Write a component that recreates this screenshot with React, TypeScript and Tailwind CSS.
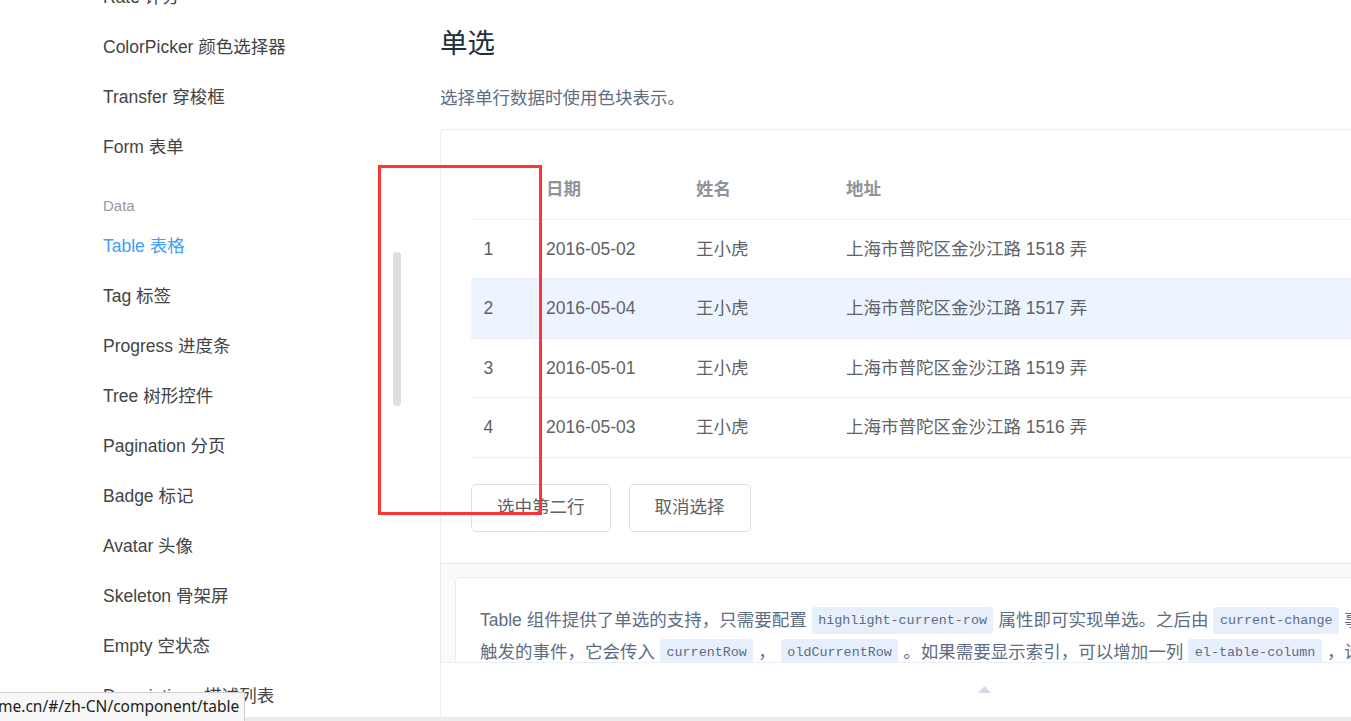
import React from "react";

const navTop = ["Rate 评分", "ColorPicker 颜色选择器", "Transfer 穿梭框", "Form 表单"];
const navData = [
  "Table 表格",
  "Tag 标签",
  "Progress 进度条",
  "Tree 树形控件",
  "Pagination 分页",
  "Badge 标记",
  "Avatar 头像",
  "Skeleton 骨架屏",
  "Empty 空状态",
  "Descriptions 描述列表",
];

const rows = [
  { date: "2016-05-02", name: "王小虎", address: "上海市普陀区金沙江路 1518 弄" },
  { date: "2016-05-04", name: "王小虎", address: "上海市普陀区金沙江路 1517 弄" },
  { date: "2016-05-01", name: "王小虎", address: "上海市普陀区金沙江路 1519 弄" },
  { date: "2016-05-03", name: "王小虎", address: "上海市普陀区金沙江路 1516 弄" },
];

function Code({ children }: { children: React.ReactNode }) {
  return (
    <span className="mx-[5px] inline-block h-[27px] rounded-[3px] bg-[#e6effb] px-[6.5px] font-['Liberation_Mono',monospace] text-[13.4px] leading-[27px] text-[#5e6d82]">
      {children}
    </span>
  );
}

export default function App() {
  return (
    <div className="relative flex h-[721px] w-[1351px] overflow-hidden bg-white font-['Liberation_Sans','Noto_Sans_CJK_SC',sans-serif]">
      {/* Sidebar */}
      <aside className="flex w-[440px] shrink-0 flex-col pl-[103px] -mt-[28px]">
        {navTop.map((item) => (
          <div key={item} className="h-[50px] whitespace-nowrap text-[17.5px] leading-[50px] text-[#444]">
            {item}
          </div>
        ))}
        <div className="h-[50px] pt-[26px] text-[15px] leading-[16px] text-[#999]">Data</div>
        {navData.map((item, i) => (
          <div
            key={item}
            className={
              i === 0
                ? "h-[50px] whitespace-nowrap text-[17.5px] leading-[50px] text-[#409eff]"
                : "h-[50px] whitespace-nowrap text-[17.5px] leading-[50px] text-[#444]"
            }
          >
            {item}
          </div>
        ))}
      </aside>

      {/* Main */}
      <main className="flex w-[1088px] shrink-0 flex-col">
        <h3 className="mt-[26px] text-[27.5px] font-normal leading-[36px] text-[#1f2f3d]">单选</h3>
        <p className="mt-[22px] text-[17.5px] leading-[28px] text-[#5e6d82]">选择单行数据时使用色块表示。</p>

        <div className="mt-[17px] flex flex-1 flex-col rounded-t-[5px] border-x border-t border-[#ebebeb]">
          {/* Source */}
          <div className="border-b border-[#ebebeb] px-[30px] pb-[31px] pt-[30px]">
            <div className="text-[17.5px]">
              <div className="flex h-[60px] items-center border-b border-[#ebeef5] font-bold text-[#909399]">
                <div className="w-[62.5px] pl-[12.5px]"></div>
                <div className="w-[150px] pl-[12.5px]">日期</div>
                <div className="w-[150px] pl-[12.5px]">姓名</div>
                <div className="flex-1 pl-[12.5px]">地址</div>
              </div>
              {rows.map((r, i) => (
                <div
                  key={r.date}
                  className={
                    i === 1
                      ? "flex h-[59.4px] items-center border-b border-[#ebeef5] bg-[#ecf5ff] text-[#606266]"
                      : "flex h-[59.4px] items-center border-b border-[#ebeef5] text-[#606266]"
                  }
                >
                  <div className="w-[62.5px] pl-[12.5px]">{i + 1}</div>
                  <div className="w-[150px] pl-[12.5px]">{r.date}</div>
                  <div className="w-[150px] pl-[12.5px]">{r.name}</div>
                  <div className="flex-1 whitespace-nowrap pl-[12.5px]">{r.address}</div>
                </div>
              ))}
            </div>
            <div className="mt-[26px] flex gap-[18px]">
              <button className="h-[48px] rounded-[5px] border border-[#dcdfe6] bg-white px-[25px] text-[17.5px] text-[#606266]">
                选中第二行
              </button>
              <button className="h-[48px] rounded-[5px] border border-[#dcdfe6] bg-white px-[25px] text-[17.5px] text-[#606266]">
                取消选择
              </button>
            </div>
          </div>

          {/* Meta */}
          <div className="h-[98px] overflow-hidden bg-[#fafafa] px-[14px] pt-[13px]">
            <div className="rounded-[5px] border border-[#ebebeb] bg-white px-[24px] pt-[27px] pb-[20px] text-[17.5px] text-[#5e6d82]">
              <div className="flex h-[32px] items-center whitespace-nowrap">
                <span>Table 组件提供了单选的支持，只需要配置</span>
                <Code>highlight-current-row</Code>
                <span>属性即可实现单选。之后由</span>
                <Code>current-change</Code>
                <span>事件来管理选中时</span>
              </div>
              <div className="flex h-[32px] items-center whitespace-nowrap">
                <span>触发的事件，它会传入</span>
                <Code>currentRow</Code>
                <span>，</span>
                <Code>oldCurrentRow</Code>
                <span>。如果需要显示索引，可以增加一列</span>
                <Code>el-table-column</Code>
                <span>，设置</span>
                <Code>type</Code>
                <span>属性为</span>
                <Code>index</Code>
                <span>即可显示从 1 开始的索引号。</span>
              </div>
            </div>
          </div>

          {/* Control */}
          <div className="flex h-[55px] items-center justify-center border-t border-[#eaeefb] bg-white">
            <svg width="13" height="7" viewBox="0 0 13 7">
              <polygon points="6.5,0 13,7 0,7" fill="#d3dce6" />
            </svg>
          </div>
          <div className="h-[4px]"></div>
        </div>
      </main>

      {/* sidebar scrollbar thumb */}
      <div className="absolute left-[393px] top-[252px] h-[154px] w-[8px] rounded-full bg-[#dddee0]"></div>

      {/* annotation box */}
      <div className="absolute left-[378px] top-[165px] h-[350px] w-[164px] border-[3px] border-[#ff3535]"></div>

      {/* status bar url */}
      <div className="absolute bottom-0 left-0 flex h-[29px] w-[245px] items-center overflow-hidden border-r border-t border-[#cfcfcf] bg-[#f7f7f7] font-['Noto_Sans',sans-serif] text-[15.5px] text-[#222]">
        <span className="-ml-[2px] whitespace-nowrap">me.cn/#/zh-CN/component/table</span>
      </div>
      <div className="absolute bottom-0 left-[245px] right-0 h-[4px] bg-[#ececec]"></div>
    </div>
  );
}
